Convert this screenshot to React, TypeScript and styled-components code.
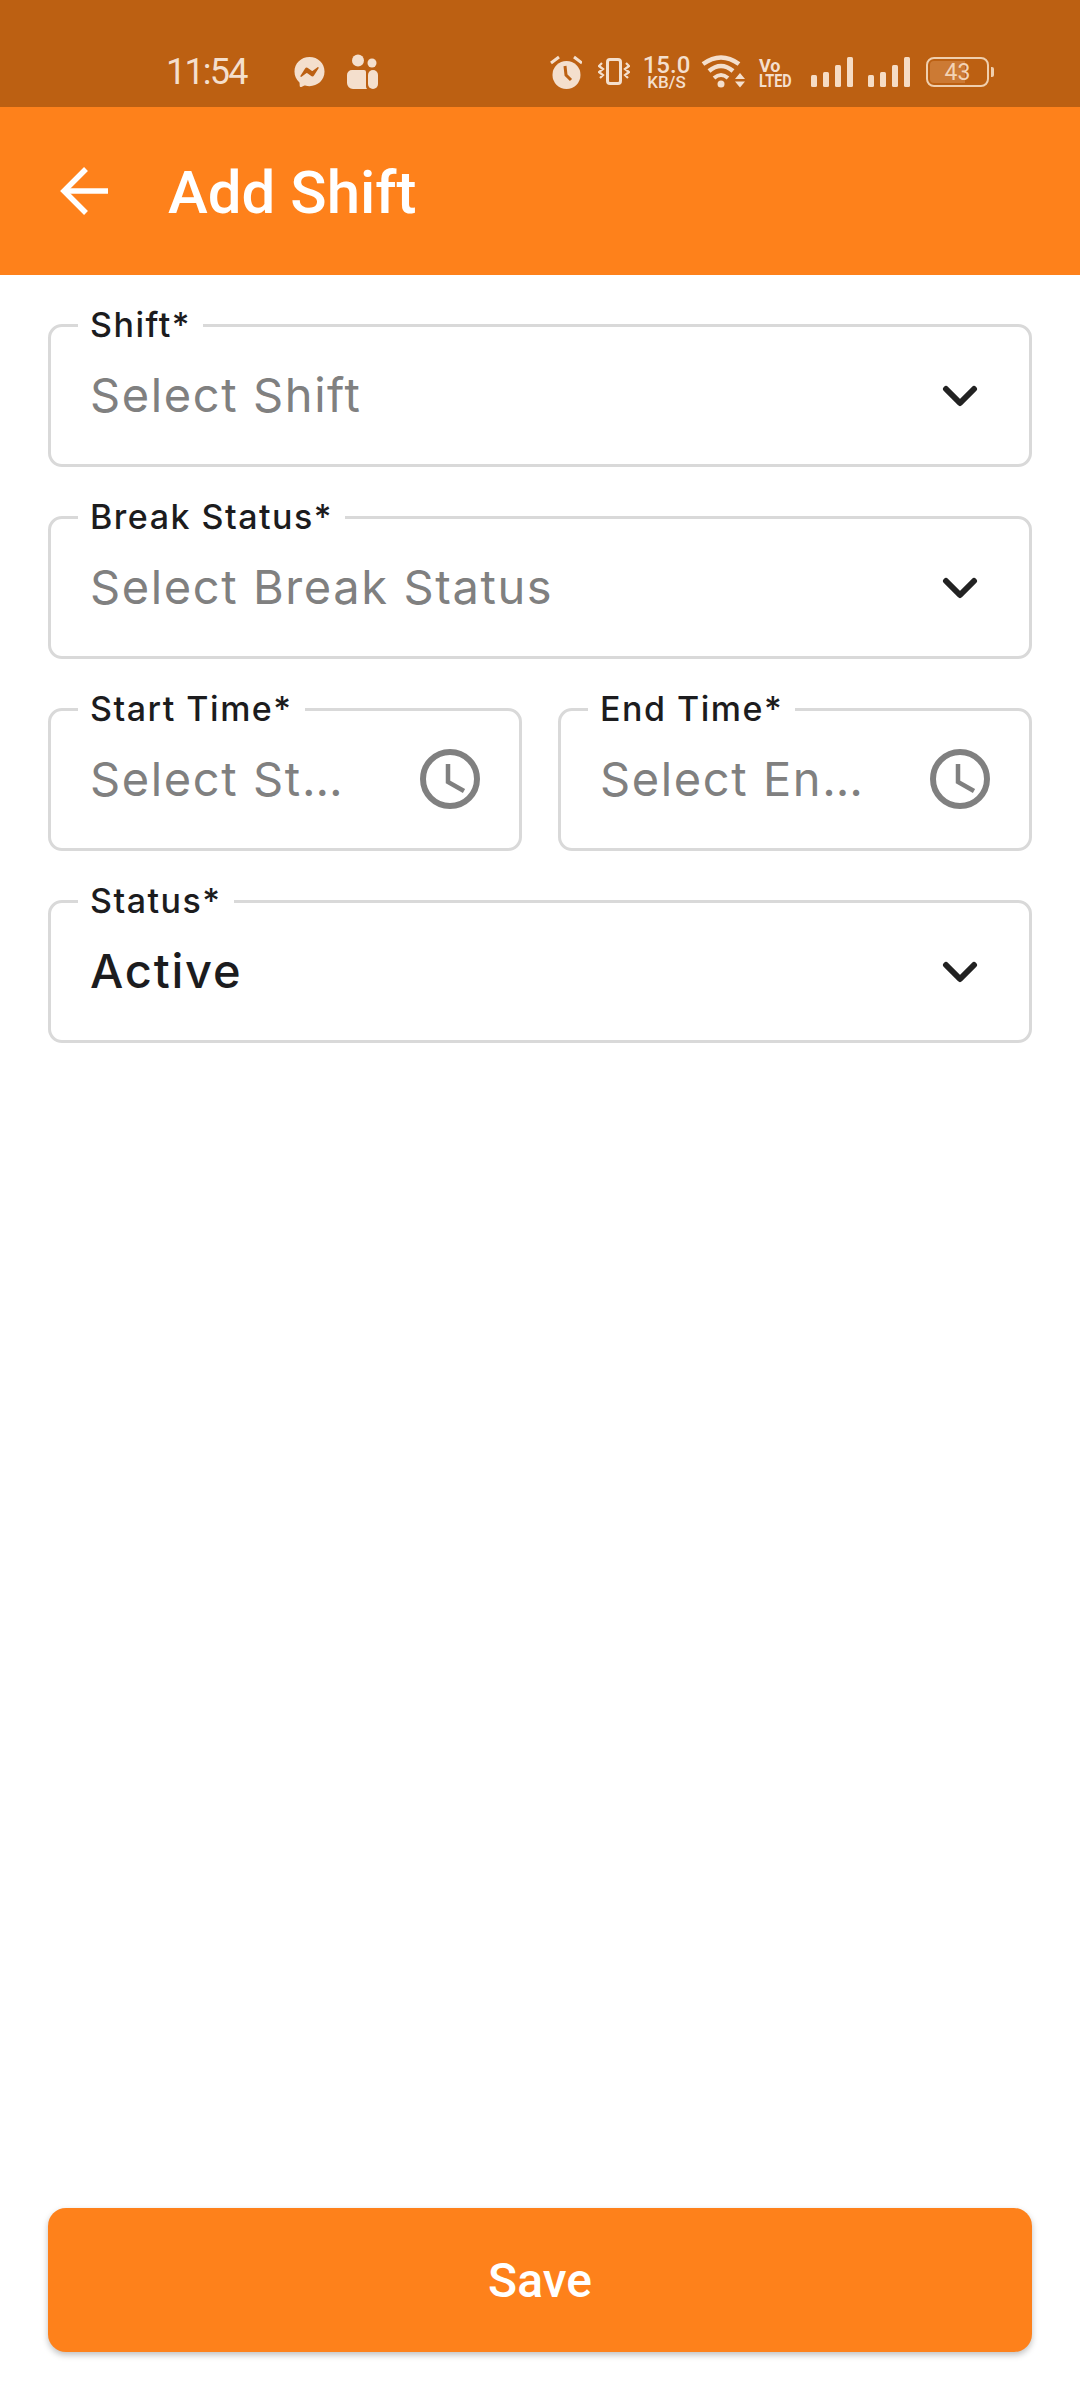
import React from "react";
import styled, { createGlobalStyle } from "styled-components";
import { FaFacebookMessenger } from "react-icons/fa";

const GlobalStyle = createGlobalStyle`
  html, body {
    margin: 0;
    padding: 0;
    background: #fff;
  }
`;

const Page = styled.div`
  width: 1080px;
  height: 2400px;
  display: flex;
  flex-direction: column;
  background: #fff;
  overflow: hidden;
`;

const StatusBar = styled.div`
  height: 107px;
  flex: none;
  box-sizing: border-box;
  padding: 50px 86px 0 166px;
  display: flex;
  align-items: flex-start;
  justify-content: space-between;
  background: #bc6012;
  color: #f4dfcd;
  font-family: Roboto, sans-serif;
`;

const StatusGroup = styled.div`
  display: flex;
  align-items: center;
  height: 44px;
`;

const Clock = styled.span`
  width: 81px;
  font-size: 36px;
  line-height: 44px;
  letter-spacing: -1.8px;
  margin-right: 47px;
`;

const Speed = styled.div`
  width: 47px;
  margin: 2px 11px 0 13px;
  display: flex;
  flex-direction: column;
  align-items: center;
  font-size: 24px;
  line-height: 19px;
  font-weight: 500;
  span {
    font-size: 17px;
    line-height: 15px;
  }
`;

const Volte = styled.div`
  width: 36px;
  margin: 2px 15px 0 14px;
  font-size: 18px;
  line-height: 15px;
  font-weight: 700;
  span {
    display: block;
    font-size: 19px;
    transform: scaleX(0.76);
    transform-origin: left center;
    white-space: nowrap;
  }
`;

const Signal = styled.div`
  width: 43px;
  height: 30px;
  margin-right: 14px;
  padding-left: 1px;
  box-sizing: border-box;
  display: flex;
  align-items: flex-end;
  justify-content: space-between;
`;

const SignalBar = styled.i<{ $h: number }>`
  display: block;
  width: 6px;
  height: ${(p) => p.$h}px;
  background: #f6dcc4;
  border-radius: 1.5px;
`;

const Battery = styled.div`
  width: 63px;
  height: 30px;
  margin-left: 2px;
  box-sizing: border-box;
  border: 2.5px solid #f0cfae;
  border-radius: 8px;
  padding: 2px;
  background: linear-gradient(90deg, #cc7a34 64%, transparent 64%) content-box;
  display: flex;
  align-items: center;
  justify-content: center;
  font-size: 23px;
  line-height: 1;
  color: #f3d3b5;
`;

const BatteryTip = styled.i`
  display: block;
  width: 3px;
  height: 10px;
  margin-left: 2px;
  background: #f0cfae;
  border-radius: 0 2px 2px 0;
`;

const AppBar = styled.header`
  height: 168px;
  flex: none;
  display: flex;
  align-items: center;
  padding-left: 60px;
  background: #fe811b;
  color: #fff;
`;

const BackIcon = styled.svg`
  width: 48px;
  height: 48px;
  margin-right: 60px;
  flex: none;
`;

const Title = styled.h1`
  margin: 4px 0 0;
  font-family: Roboto, sans-serif;
  font-size: 60px;
  line-height: 72px;
  font-weight: 500;
`;

const Form = styled.main`
  flex: 1;
  box-sizing: border-box;
  padding: 32px 48px 0;
  display: grid;
  align-content: start;
  gap: 32px;
`;

const TimeRow = styled.div`
  display: grid;
  grid-template-columns: 1fr 1fr;
  gap: 36px;
`;

const Field = styled.fieldset`
  min-width: 0;
  height: 160px;
  box-sizing: border-box;
  margin: 0;
  padding: 0 39px;
  border: 3px solid #d9d9d9;
  border-radius: 14px;
`;

const Label = styled.legend`
  margin-left: -12px;
  padding: 0 12px;
  font-family: Inter, sans-serif;
  font-size: 34px;
  line-height: 36px;
  font-weight: 500;
  letter-spacing: 1.5px;
  color: #1c1c1e;
`;

const FieldBody = styled.div`
  height: 104px;
  display: flex;
  align-items: center;
  justify-content: space-between;
`;

const FieldText = styled.span<{ $filled?: boolean }>`
  min-width: 0;
  font-family: Inter, sans-serif;
  font-size: 47px;
  line-height: 60px;
  font-weight: ${(p) => (p.$filled ? 500 : 400)};
  letter-spacing: ${(p) => (p.$filled ? "1.8px" : "1.6px")};
  color: ${(p) => (p.$filled ? "#1c1c1e" : "#808080")};
  white-space: nowrap;
`;

const TimeText = styled(FieldText)`
  width: 272px;
  overflow: hidden;
  text-overflow: ellipsis;
`;

const Chevron = styled.svg`
  width: 36px;
  height: 24px;
  flex: none;
  margin: 2px 12px 0 0;
`;

const ClockIcon = styled.svg`
  width: 60px;
  height: 60px;
  flex: none;
`;

const Footer = styled.div`
  padding: 0 48px 48px;
`;

const SaveButton = styled.button`
  display: block;
  width: 100%;
  height: 144px;
  border: 0;
  border-radius: 18px;
  background: #fe811b;
  box-shadow: 0 3px 6px rgba(0, 0, 0, 0.25);
  color: #fff;
  font-family: Roboto, sans-serif;
  font-size: 48px;
  font-weight: 500;
`;

const StatusIcon = styled.svg<{ $w: number; $gap?: number }>`
  width: ${(p) => p.$w}px;
  height: 36px;
  flex: none;
  margin-right: ${(p) => p.$gap ?? 0}px;
`;

const Messenger = styled(FaFacebookMessenger)`
  width: 31px;
  height: 32px;
  margin-right: 21px;
  color: #f4dfcd;
`;

const ink = "#f4dfcd";

const DownChevron = () => (
  <Chevron viewBox="0 0 36 24" fill="none" stroke="#222" strokeWidth="6" strokeLinecap="round" strokeLinejoin="round">
    <path d="M4 5 18 19 32 5" />
  </Chevron>
);

const TimeIcon = () => (
  <ClockIcon viewBox="0 0 60 60" fill="none" stroke="#808080">
    <circle cx="30" cy="30" r="27" strokeWidth="6" />
    <path d="M28 15v18l16 9" strokeWidth="4.5" />
  </ClockIcon>
);

const SelectField = ({ label, value, filled }: { label: string; value: string; filled?: boolean }) => (
  <Field>
    <Label>{label}</Label>
    <FieldBody>
      <FieldText $filled={filled}>{value}</FieldText>
      <DownChevron />
    </FieldBody>
  </Field>
);

const TimeField = ({ label, value }: { label: string; value: string }) => (
  <Field>
    <Label>{label}</Label>
    <FieldBody>
      <TimeText>{value}</TimeText>
      <TimeIcon />
    </FieldBody>
  </Field>
);

const Bars = () => (
  <Signal>
    <SignalBar $h={12} />
    <SignalBar $h={15} />
    <SignalBar $h={22} />
    <SignalBar $h={30} />
  </Signal>
);

const App = () => {
  return (
    <Page>
      <GlobalStyle />
      <StatusBar>
        <StatusGroup>
          <Clock>11:54</Clock>
          <Messenger />
          <StatusIcon $w={32} viewBox="0 0 32 36" fill={ink}>
            <circle cx="12" cy="6.5" r="6" />
            <circle cx="26" cy="9" r="4.5" />
            <path d="M1 21a5 5 0 0 1 5-5h12a2 2 0 0 1 2 2v14a4 4 0 0 0 1 3H7a6 6 0 0 1-6-6z" />
            <rect x="22" y="16" width="10" height="19" rx="5" />
          </StatusIcon>
        </StatusGroup>
        <StatusGroup>
          <StatusIcon $w={32} $gap={16} viewBox="0 0 32 36" fill={ink}>
            <circle cx="16.5" cy="21" r="14" />
            <path d="M1 9l8-6M32 9l-8-6" stroke={ink} strokeWidth="3" />
            <path d="M15 12l1 9 5 5" fill="none" stroke="#bc6012" strokeWidth="3" />
          </StatusIcon>
          <StatusIcon $w={32} viewBox="0 0 32 36" fill="none" stroke={ink}>
            <rect x="9.5" y="5.5" width="13" height="24" rx="2.5" strokeWidth="3" />
            <path d="M4 9l-3 3 4 3-4 3 4 3-3 3M28 9l3 3-4 3 4 3-4 3 3 3" strokeWidth="2.2" />
          </StatusIcon>
          <Speed>
            15.0
            <span>KB/S</span>
          </Speed>
          <StatusIcon $w={44} viewBox="0 0 44 36" fill="none" stroke={ink}>
            <path d="M2 10Q20-3 38 10" strokeWidth="4.5" />
            <path d="M8 17Q20 7 32 17" strokeWidth="4.5" />
            <path d="M13 24Q20 18 27 24" strokeWidth="4" />
            <circle cx="20" cy="30" r="3.5" fill={ink} stroke="none" />
            <path d="M34 25l5-6 5 6zM34 27.5l5 6 5-6z" fill={ink} stroke="none" />
          </StatusIcon>
          <Volte>
            Vo
            <span>LTED</span>
          </Volte>
          <Bars />
          <Bars />
          <Battery>43</Battery>
          <BatteryTip />
        </StatusGroup>
      </StatusBar>
      <AppBar>
        <BackIcon viewBox="0 0 48 48" fill="none" stroke="#fff" strokeWidth="5.5">
          <path d="M48 24H4" />
          <path d="M26 2 4 24l22 22" />
        </BackIcon>
        <Title>Add Shift</Title>
      </AppBar>
      <Form>
        <SelectField label="Shift*" value="Select Shift" />
        <SelectField label="Break Status*" value="Select Break Status" />
        <TimeRow>
          <TimeField label="Start Time*" value="Select Start Time" />
          <TimeField label="End Time*" value="Select End Time" />
        </TimeRow>
        <SelectField label="Status*" value="Active" filled />
      </Form>
      <Footer>
        <SaveButton>Save</SaveButton>
      </Footer>
    </Page>
  );
};

export default App;
